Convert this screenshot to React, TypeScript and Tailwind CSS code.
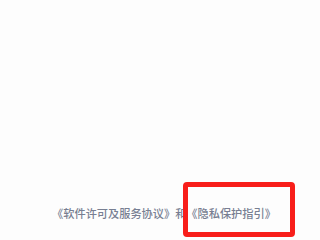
export default function App() {
  return (
    <div className="relative w-[320px] h-[240px] bg-[#fdfdfd] flex flex-col items-center overflow-hidden">
      <div className="flex-1" />
      <p
        className="mb-[20px] ml-[8px] text-[11.2px] leading-[14px] font-medium text-[#787f92] whitespace-nowrap"
        style={{ fontFamily: '"Noto Sans CJK SC", sans-serif' }}
      >
        《软件许可及服务协议》和《隐私保护指引》
      </p>
      {/* annotation frame */}
      <div className="absolute left-[183px] top-[182px] w-[112px] h-[55px] border-[5px] border-[#f81e1a] rounded-[4px]" />
    </div>
  )
}
